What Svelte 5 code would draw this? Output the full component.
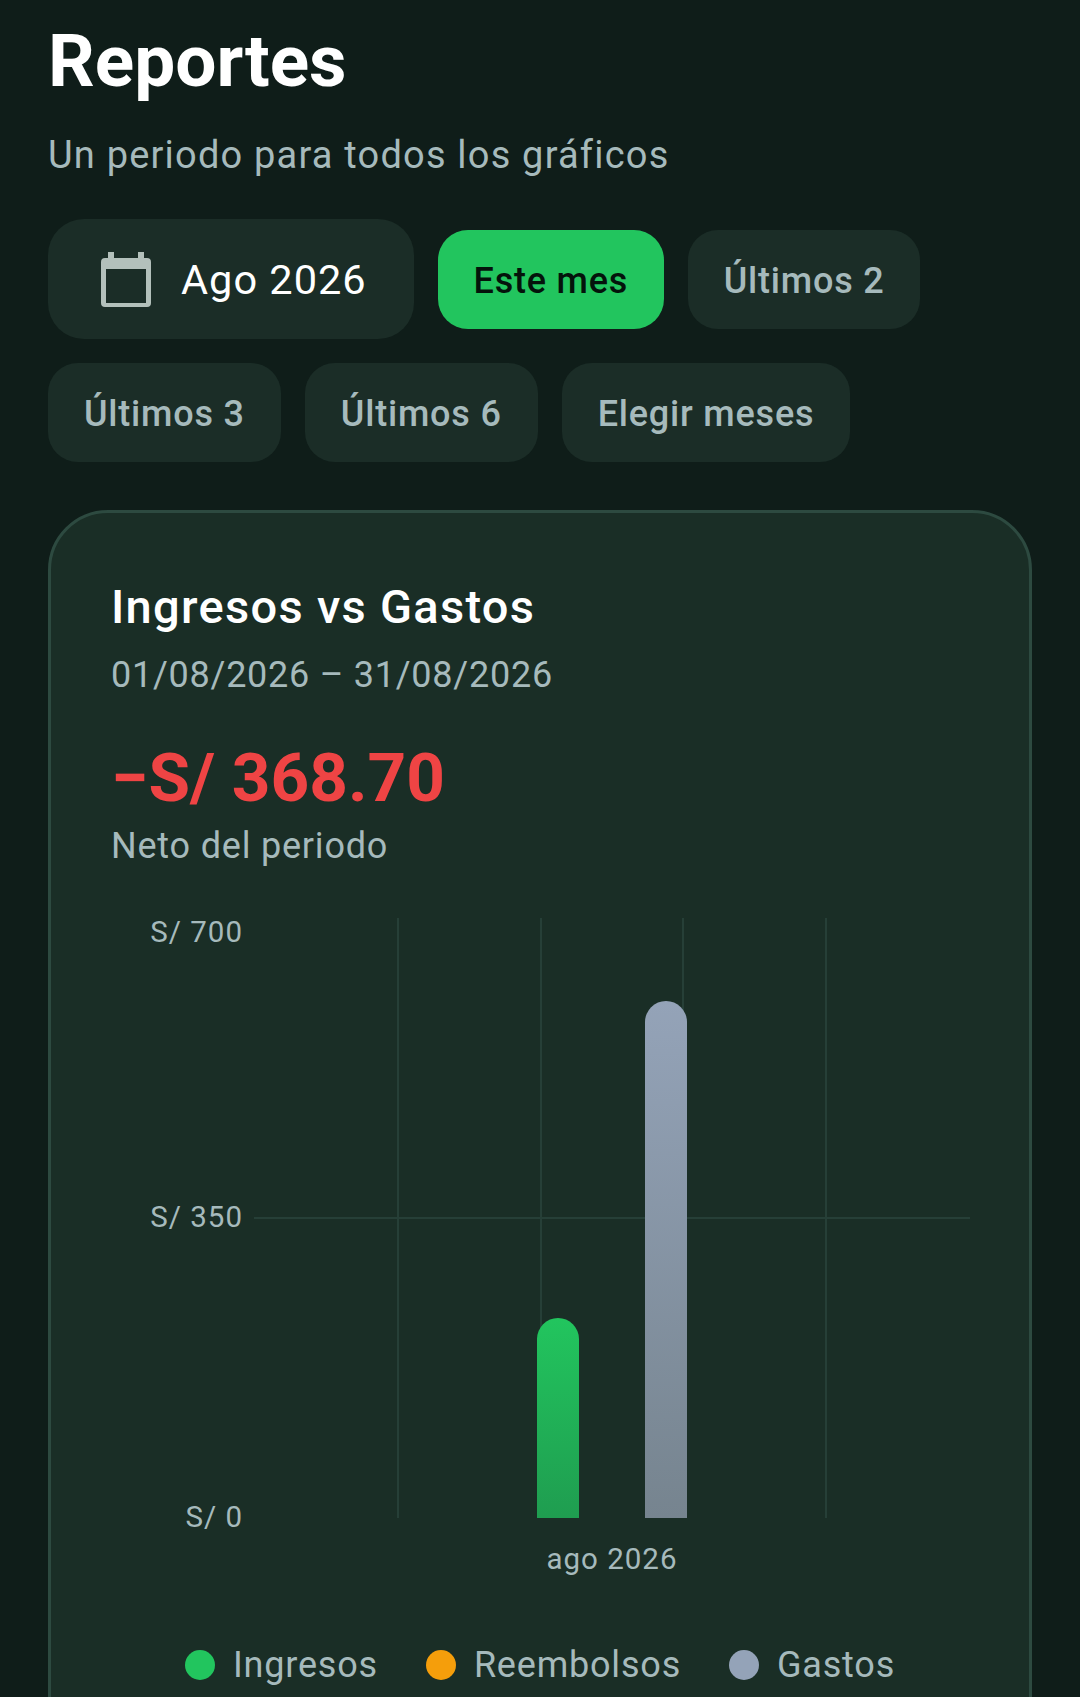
<script>
	const chips = ['Últimos 3', 'Últimos 6', 'Elegir meses'];
	const gridX = [398, 541, 683, 826];
	const legend = [
		{ label: 'Ingresos', color: '#22c55e' },
		{ label: 'Reembolsos', color: '#f59e0b' },
		{ label: 'Gastos', color: '#94a3b8' }
	];
	// chart svg starts at the card's content origin
	const ox = 51;
	const oy = 908;
</script>

<main class="page">
	<h1>Reportes</h1>
	<p class="sub">Un periodo para todos los gráficos</p>

	<div class="chips">
		<button class="month">
			<svg width="50" height="55" viewBox="0 0 50 55">
				<path
					fill="#b3c0bb"
					fill-rule="evenodd"
					d="M7 0h6v6h24V0h6v6h3a4 4 0 0 1 4 4v41a4 4 0 0 1-4 4H4a4 4 0 0 1-4-4V10a4 4 0 0 1 4-4h3ZM5 17v34h40V17Z"
				/>
			</svg>
			<span>Ago 2026</span>
		</button>
		<button class="chip active">Este mes</button>
		<button class="chip">Últimos 2</button>
		{#each chips as c}
			<button class="chip">{c}</button>
		{/each}
	</div>

	<section class="card">
		<h2>Ingresos vs Gastos</h2>
		<p class="range">01/08/2026 – 31/08/2026</p>
		<p class="net">−S/ 368.70</p>
		<p class="netlabel">Neto del periodo</p>

		<svg class="chart" width="978" height="680" viewBox="{ox} {oy} 978 680">
			<defs>
				<linearGradient id="g1" x1="0" y1="0" x2="0" y2="1">
					<stop offset="0" stop-color="#22c55e" />
					<stop offset="1" stop-color="#1f9d50" />
				</linearGradient>
				<linearGradient id="g2" x1="0" y1="0" x2="0" y2="1">
					<stop offset="0" stop-color="#94a3b8" />
					<stop offset="1" stop-color="#76848f" />
				</linearGradient>
			</defs>
			{#each gridX as x}
				<line x1={x} x2={x} y1="918" y2="1518" class="grid" />
			{/each}
			<line x1="254" x2="970" y1="1218" y2="1218" class="grid" />
			<path d="M537 1518V1339a21 21 0 0 1 42 0V1518Z" fill="url(#g1)" />
			<path d="M645 1518V1022a21 21 0 0 1 42 0V1518Z" fill="url(#g2)" />
			<text x="243" y="942" text-anchor="end">S/ 700</text>
			<text x="243" y="1227" text-anchor="end">S/ 350</text>
			<text x="243" y="1527" text-anchor="end">S/ 0</text>
			<text x="612" y="1569" text-anchor="middle">ago 2026</text>
		</svg>

		<ul class="legend">
			{#each legend as item}
				<li>
					<i style="background: {item.color}"></i>
					{item.label}
				</li>
			{/each}
		</ul>
	</section>
</main>

<style>
	:global(body) {
		margin: 0;
		background: #0f1d19;
	}
	.page {
		height: 1697px;
		overflow: hidden;
		box-sizing: border-box;
		padding: 19px 48px 0;
		font-family: Roboto, sans-serif;
		color: #fff;
	}
	h1 {
		margin: 0;
		font-size: 73px;
		line-height: 84px;
		font-weight: 700;
	}
	.sub {
		margin: 28px 0 0;
		font-size: 38px;
		line-height: 48px;
		letter-spacing: 1.2px;
		color: #a6babc;
	}
	.chips {
		display: flex;
		flex-wrap: wrap;
		align-items: center;
		gap: 24px;
		margin-top: 40px;
	}
	button {
		border: 0;
		font-family: inherit;
		background: #1b2d27;
	}
	.month {
		display: flex;
		align-items: center;
		gap: 30px;
		width: 366px;
		height: 120px;
		padding: 0 0 0 53px;
		border-radius: 36px;
		color: #fff;
		font-size: 41.5px;
		letter-spacing: 1px;
	}
	.chip {
		height: 99px;
		padding: 3px 36px 0;
		border-radius: 30px;
		font-size: 36px;
		font-weight: 500;
		letter-spacing: 0.8px;
		color: #a6babc;
	}
	.active {
		padding: 3px 35.5px 0;
		background: #22c55e;
		color: #04130b;
	}
	.card {
		margin-top: 48px;
		height: 1300px;
		box-sizing: border-box;
		padding: 65px 60px 0;
		border: 3px solid #2d4a40;
		border-radius: 60px;
		background: #1a2e26;
	}
	h2 {
		margin: 0;
		font-size: 47px;
		line-height: 58px;
		font-weight: 500;
		letter-spacing: 1.3px;
	}
	.range {
		margin: 16px 0 0;
		font-size: 36px;
		line-height: 46px;
		letter-spacing: 0.75px;
		color: #a6babc;
	}
	.net {
		margin: 41px 0 0;
		font-size: 67.5px;
		line-height: 78px;
		font-weight: 700;
		color: #ef4444;
	}
	.netlabel {
		margin: 7px 0 0;
		font-size: 36px;
		line-height: 44px;
		letter-spacing: 0.8px;
		color: #a6babc;
	}
	.chart {
		display: block;
		margin: 40px -60px 0;
	}
	.chart text {
		font-size: 29.5px;
		letter-spacing: 1px;
		fill: #a6babc;
	}
	.grid {
		stroke: #263f37;
		stroke-width: 2;
	}
	.legend {
		display: flex;
		justify-content: center;
		gap: 48px;
		margin: 56px 0 0;
		padding: 0;
		list-style: none;
		font-size: 36px;
		letter-spacing: 0.8px;
		color: #a6babc;
	}
	.legend li {
		display: flex;
		align-items: center;
		gap: 18px;
	}
	.legend i {
		width: 30px;
		height: 30px;
		border-radius: 50%;
	}
</style>
